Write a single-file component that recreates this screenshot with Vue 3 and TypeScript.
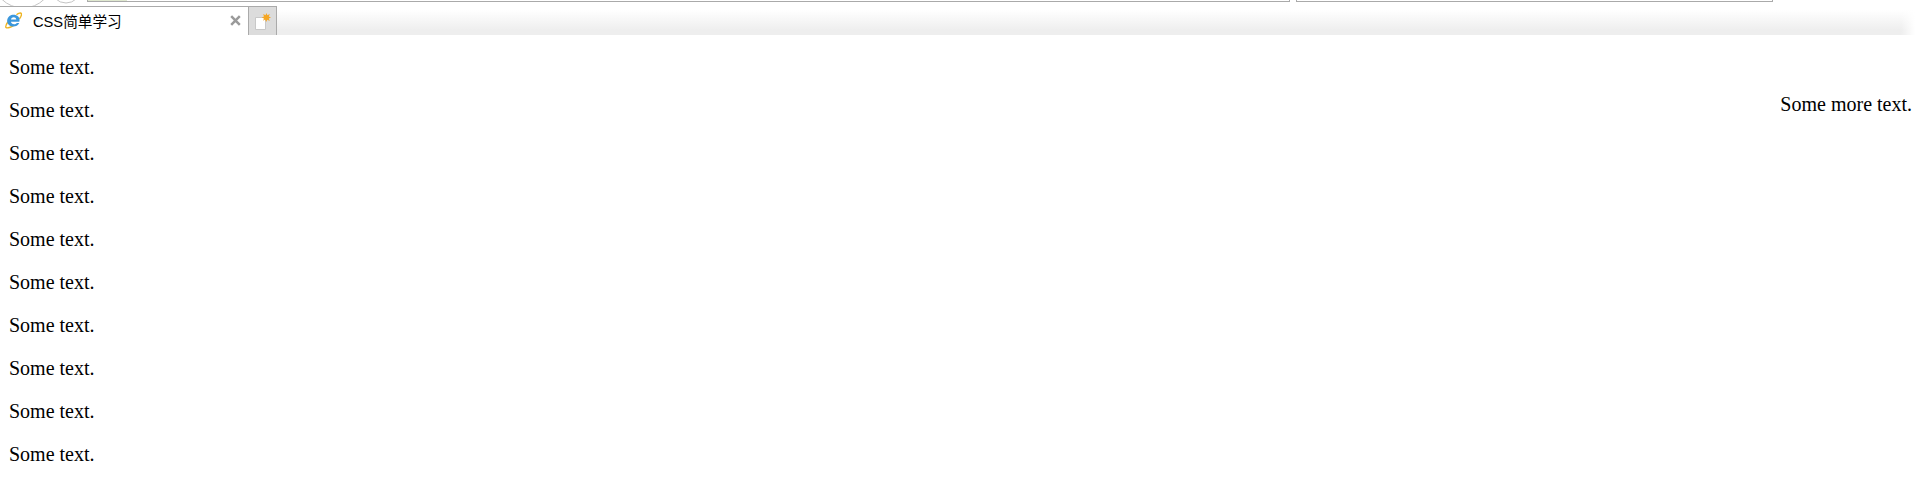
<script setup lang="ts">
const lines: string[] = Array(10).fill('Some text.');
</script>

<template>
  <div class="page">
    <div class="toolbar">
      <svg class="nav" width="87" height="6" viewBox="0 0 87 6">
        <circle cx="23" cy="-22" r="30" fill="#fff" stroke="#c4c4c4" />
        <circle cx="66" cy="-12" r="15" fill="#fff" stroke="#c4c4c4" />
      </svg>
      <div class="address"><div class="progress"></div></div>
      <div class="search"></div>
    </div>
    <div class="tabs">
      <div class="tab">
        <svg class="ie" width="17" height="17" viewBox="0 0 20 20">
          <path d="M13.500 3.200C16 1.200 18.800.6 19.300 2c.4 1.200-.5 3.500-2.300 6M3.500 11.500C1.500 14.500.3 17.300 1.200 18.200c1.300 1.300 6-.2 9.300-2.800" fill="none" stroke="#eeb422" stroke-width="1.700" />
          <path d="M16.800 11.500H7c.3 3.300 5 3.800 7 1.500h2.800C15 17.500 8 18.500 4.700 15.300 1.500 12.200 2 7.300 5.300 4.700 8.200 2.500 12.800 2.700 15.500 5.200 17.300 7 17.500 9.500 16.800 11.500ZM7 8.700H13.300C12.800 5.500 7.800 5.500 7 8.700Z" fill="#3b97dc" fill-rule="evenodd" />
        </svg>
        <span class="title">CSS简单学习</span>
        <svg class="close" width="11" height="11" viewBox="0 0 11 11">
          <path d="M1.200 1.200l8.600 8.600M9.800 1.200l-8.600 8.600" stroke="#9a9a9a" stroke-width="2.500" />
        </svg>
      </div>
      <div class="new-tab">
        <svg width="17" height="17" viewBox="0 0 17 17">
          <path d="M1.500 4.500h10v12h-10z" fill="#fff" stroke="#c8c8c8" />
          <path d="M12.500 0l.9 2.300L15.800 1l-1 2.500L17 4.500l-2.200 1 .9 2.500-2.400-1.200-1.200 2.200-.9-2.400L9 7.700l1-2.200-2.300-1 2.300-.9L9.200 1l2.300 1.200z" fill="#f5a623" />
        </svg>
      </div>
      <div class="strip"></div>
    </div>
    <div class="content">
      <div class="left">
        <p v-for="(line, i) in lines" :key="i">{{ line }}</p>
      </div>
      <p class="right">Some more text.</p>
    </div>
  </div>
</template>

<style>
html,
body {
  background: #fff;
}
</style>

<style scoped>
.page {
  height: 493px;
  overflow: hidden;
  font-family: "Liberation Serif", serif;
  color: #000;
}

.toolbar {
  display: flex;
  height: 6px;
}

.nav {
  flex: none;
}

.address {
  width: 1201px;
  height: 1px;
  border: solid #aaa;
  border-width: 0 1px 1px;
  margin-right: 6px;
}

.progress {
  width: 39px;
  height: 1px;
  background: #dfe8cf;
}

.search {
  width: 475px;
  height: 1px;
  border: solid #aaa;
  border-width: 0 1px 1px;
}

.tabs {
  display: flex;
  height: 29px;
}

.tab {
  width: 248px;
  display: flex;
  align-items: center;
  border-top: 1px solid #aaa;
  box-sizing: border-box;
  font-family: "Liberation Sans", "Noto Sans CJK SC", sans-serif;
  font-size: 14.670px;
  padding: 0 0 2px 5px;
}

.ie {
  flex: none;
}

.title {
  margin-left: 11px;
  flex: 1;
}

.close {
  margin-right: 7px;
}

.new-tab {
  width: 29px;
  box-sizing: border-box;
  background: #dcdcdc;
  border: 1px solid #aaa;
  border-bottom: 0;
  display: flex;
  align-items: center;
  justify-content: center;
}

.strip {
  flex: 1;
  background:
    linear-gradient(to right, transparent calc(100% - 14px), #fff),
    linear-gradient(#fff 4px, #eee 24px);
  margin-right: 4px;
}

.content {
  display: flex;
  justify-content: space-between;
  padding: 1px 7px 0 9px;
  font-size: 20px;
  line-height: 23px;
}

.left p {
  margin: 20px 0;
}

.right {
  margin: 57px 0 0;
}
</style>
